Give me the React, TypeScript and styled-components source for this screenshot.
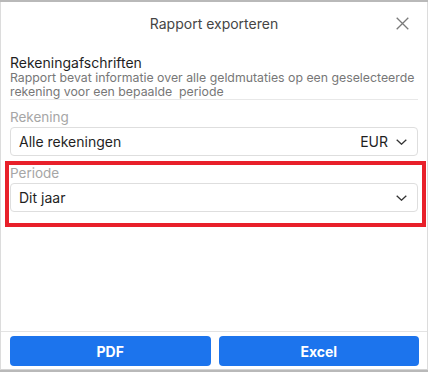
import styled, { createGlobalStyle } from 'styled-components';

const GlobalStyle = createGlobalStyle`
  html, body {
    margin: 0;
    padding: 0;
    background: #b9b9b9;
  }
  body {
    font-family: Inter, "Noto Sans", Arial, sans-serif;
  }
`;

const Dialog = styled.div`
  box-sizing: border-box;
  margin-top: 2px;
  width: 428px;
  height: 368px;
  background: #fff;
  border-left: 1px solid #dcdcdc;
  border-right: 1px solid #dcdcdc;
  border-bottom: 1px solid #d4d4d4;
  display: flex;
  flex-direction: column;
`;

const Header = styled.div`
  display: grid;
  grid-template-columns: 1fr auto 1fr;
  align-items: center;
  height: 42px;
`;

const Title = styled.div`
  grid-column: 2;
  font-size: 14px;
  color: #454545;
`;

const CloseButton = styled.button`
  justify-self: end;
  margin-right: 18px;
  width: 14px;
  height: 14px;
  padding: 0;
  border: none;
  background: none;
  display: flex;
  align-items: center;
  justify-content: center;
  cursor: pointer;
`;

const Body = styled.div`
  flex: 1;
  padding: 0 9px;
`;

const Intro = styled.div`
  padding-top: 10px;
  border-bottom: 1px solid #e8e8e8;
`;

const SectionTitle = styled.div`
  font-size: 14px;
  line-height: 17px;
  color: #1f1f1f;
`;

const Description = styled.div`
  font-size: 12.3px;
  line-height: 14px;
  color: #777;
`;

const FieldGroup = styled.div<{ $highlighted?: boolean }>`
  display: flex;
  flex-direction: column;
  gap: 2px;
  ${({ $highlighted }) =>
    $highlighted
      ? `
    border: 4px solid #e8202a;
    margin: 5px -8px 0 -5px;
    padding: 0 4px 11px 1px;
  `
      : `
    padding-top: 9px;
  `}
`;

const Label = styled.div`
  font-size: 13.5px;
  line-height: 16px;
  color: #a6a6a6;
`;

const Select = styled.div`
  box-sizing: border-box;
  height: 29px;
  border: 1px solid #dedede;
  border-radius: 4px;
  padding: 0 10px 0 8px;
  display: flex;
  align-items: center;
  gap: 8px;
  font-size: 14px;
  color: #1f1f1f;
`;

const SelectValue = styled.span`
  flex: 1;
`;

const Currency = styled.span`
  color: #1f1f1f;
`;

const Footer = styled.div`
  border-top: 1px solid #e3e3e3;
  padding: 4px 8px 3px 9px;
  display: grid;
  grid-template-columns: 1fr 1fr;
  gap: 8px;
`;

const Button = styled.button`
  height: 30px;
  border: none;
  border-radius: 4px;
  background: #1c74ed;
  color: #fff;
  font-family: Inter, "Noto Sans", Arial, sans-serif;
  font-size: 14px;
  font-weight: 700;
  cursor: pointer;
`;

function Chevron() {
  return (
    <svg width="11" height="6" viewBox="0 0 11 6" fill="none">
      <path d="M0.7 0.7 L5.5 5.2 L10.3 0.7" stroke="#333" strokeWidth="1.3" />
    </svg>
  );
}

function CloseIcon() {
  return (
    <svg width="13" height="13" viewBox="0 0 13 13" fill="none">
      <path d="M0.7 0.7 L12.3 12.3 M12.3 0.7 L0.7 12.3" stroke="#7a7a7a" strokeWidth="1.3" />
    </svg>
  );
}

export default function App() {
  return (
    <>
      <GlobalStyle />
      <Dialog>
        <Header>
          <Title>Rapport exporteren</Title>
          <CloseButton aria-label="Sluiten">
            <CloseIcon />
          </CloseButton>
        </Header>
        <Body>
          <Intro>
            <SectionTitle>Rekeningafschriften</SectionTitle>
            <Description>
              Rapport bevat informatie over alle geldmutaties op een geselecteerde rekening voor
              een bepaalde&nbsp; periode
            </Description>
          </Intro>
          <FieldGroup>
            <Label>Rekening</Label>
            <Select>
              <SelectValue>Alle rekeningen</SelectValue>
              <Currency>EUR</Currency>
              <Chevron />
            </Select>
          </FieldGroup>
          <FieldGroup $highlighted>
            <Label>Periode</Label>
            <Select>
              <SelectValue>Dit jaar</SelectValue>
              <Chevron />
            </Select>
          </FieldGroup>
        </Body>
        <Footer>
          <Button>PDF</Button>
          <Button>Excel</Button>
        </Footer>
      </Dialog>
    </>
  );
}
